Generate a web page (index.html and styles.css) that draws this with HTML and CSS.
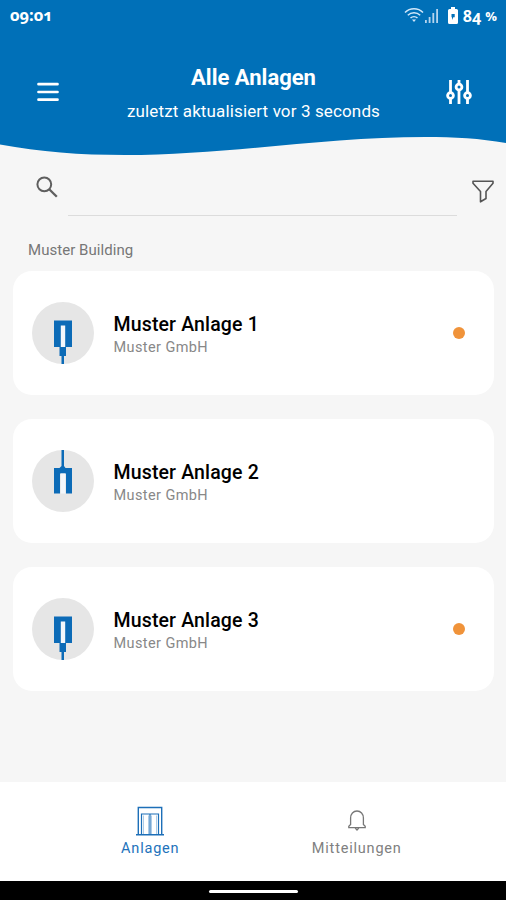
FILE: index.html
```
<!DOCTYPE html>
<html lang="de">
<head>
  <meta charset="UTF-8">
  <meta name="viewport" content="width=device-width, initial-scale=1.0">
  <title>Alle Anlagen</title>
  <link rel="stylesheet" href="styles.css">
</head>
<body>
  <header class="header">
    <div class="status-bar">
      <span class="time">09:01</span>
      <div class="status-icons">
        <svg class="wifi" width="20" height="16" viewBox="0 0 20 16" fill="none" stroke="#d3e8fa" stroke-width="1.5">
          <path d="M1 5.5C6 .6 14 .6 19 5.5M3.8 8.3c3.5-3.3 8.900-3.3 12.400 0M6.500 11c2-1.800 5-1.800 7 0"/>
          <path d="M8 12.500h4L10 15z" fill="#d3e8fa" stroke="none"/>
        </svg>
        <svg class="signal" width="14" height="15" viewBox="0 0 14 15" fill="#b5d4ee">
          <path d="M0 12h1.800v3H0zM3.700 9h1.800v6H3.700zM7.400 5h1.800v10H7.400zM11.200 1h1.800v14h-1.800z"/>
        </svg>
        <svg class="battery" width="10" height="17" viewBox="0 0 10 17">
          <path d="M3 0h4v2h1.500Q10 2 10 3.500v12Q10 17 8.500 17h-7Q0 17 0 15.500v-12Q0 2 1.500 2H3z" fill="#fff"/>
          <path d="M3.500 7h3.200v3.200H5.300L4 13v-2.800h-.5z" fill="#0070b8"/>
        </svg>
        <span class="number">84</span>
        <span class="percent">%</span>
      </div>
    </div>
    <div class="title-bar">
      <svg class="menu-icon" width="22" height="20" viewBox="0 0 22 20" stroke="#fff" stroke-width="2.700" stroke-linecap="round">
        <path d="M1.500 2.200h19M1.500 10h19M1.500 17.700h19"/>
      </svg>
      <div class="titles">
        <h1>Alle Anlagen</h1>
        <p>zuletzt aktualisiert vor 3 seconds</p>
      </div>
      <svg class="sliders-icon" width="26" height="26" viewBox="0 0 26 26" fill="none" stroke="#fff" stroke-width="2.800">
        <path d="M4.500 1v12.500M4.500 19.500V25M13 1v4M13 11v14M21.500 1v12.500M21.500 19.500V25"/>
        <circle cx="4.500" cy="16.500" r="2.900"/>
        <circle cx="13" cy="8" r="2.900"/>
        <circle cx="21.500" cy="16.500" r="2.900"/>
      </svg>
    </div>
  </header>
  <svg class="wave" width="506" height="19" viewBox="0 0 506 19">
    <path d="M0 0H506V6C480 1.500 455 0 425 0C325 0 225 18 125 18C80 18 40 15 0 7.500Z" fill="#0070b8"/>
  </svg>

  <main class="content">
    <div class="search">
      <svg class="search-icon" width="22" height="22" viewBox="0 0 22 22" fill="none" stroke="#5f5f5f">
        <circle cx="8.300" cy="8.300" r="6.900" stroke-width="2"/>
        <path d="M13 13l7.800 7.800" stroke-width="2.300"/>
      </svg>
      <div class="search-field"></div>
      <svg class="filter-icon" width="22" height="23" viewBox="0 0 22 23" fill="none" stroke="#555" stroke-width="1.600" stroke-linejoin="round">
        <path d="M1 1.300h20v2L14 11.500v7L8.500 21.800V11.500L1 3.300z"/>
      </svg>
    </div>

    <h2 class="building">Muster Building</h2>

    <div class="card">
      <svg class="avatar" width="62" height="62" viewBox="0 0 62 62">
        <circle cx="31" cy="31" r="31" fill="#e6e6e6"/>
        <path d="M22 18.500h18V45h-6v9h-2v8h-2.500v-8h-2v-9H22z" fill="#0c6bb7"/>
        <path d="M28.800 23.500h4.400V45h-4.400z" fill="#f3f7fb"/>
      </svg>
      <div class="info">
        <h3>Muster Anlage 1</h3>
        <p>Muster GmbH</p>
      </div>
      <span class="dot"></span>
    </div>

    <div class="card">
      <svg class="avatar" width="62" height="62" viewBox="0 0 62 62">
        <circle cx="31" cy="31" r="31" fill="#e6e6e6"/>
        <path d="M29.500 0H32v16l1.500 2H40v25.500h-6V23.500h-6v20h-6V18h5.500l2-2z" fill="#0c6bb7"/>
        <path d="M28.800 23.500h4.400v20h-4.400z" fill="#f3f7fb"/>
      </svg>
      <div class="info">
        <h3>Muster Anlage 2</h3>
        <p>Muster GmbH</p>
      </div>
    </div>

    <div class="card">
      <svg class="avatar" width="62" height="62" viewBox="0 0 62 62">
        <circle cx="31" cy="31" r="31" fill="#e6e6e6"/>
        <path d="M22 18.500h18V45h-6v9h-2v8h-2.500v-8h-2v-9H22z" fill="#0c6bb7"/>
        <path d="M28.800 23.500h4.400V45h-4.400z" fill="#f3f7fb"/>
      </svg>
      <div class="info">
        <h3>Muster Anlage 3</h3>
        <p>Muster GmbH</p>
      </div>
      <span class="dot"></span>
    </div>
  </main>

  <nav class="tabs">
    <div class="tab active">
      <svg width="28" height="30" viewBox="0 0 28 30" fill="none" stroke="#1d6fb8" stroke-width="1.400">
        <path d="M0 28.800h28M2.300 28.500V1.500h23.400v27"/>
        <path d="M5.500 28V8h17v20M14 8v20" stroke-width="1.200"/>
        <path d="M7.500 28V9.500M12.500 28V9.500M15.500 28V9.500M20.500 28V9.500" stroke-width=".6" stroke="#77a9d6"/>
      </svg>
      <span>Anlagen</span>
    </div>
    <div class="tab">
      <svg width="18" height="30" viewBox="0 0 18 30" fill="none" stroke="#777" stroke-width="1.300">
        <path d="M.8 21.700V20.300L2.600 18.500V12C2.600 8 5.300 5 9 5s6.400 3 6.400 7v6.500l1.800 1.800v1.400z"/>
        <path d="M7.200 22l1.800 2 1.800-2"/>
      </svg>
      <span>Mitteilungen</span>
    </div>
  </nav>
  <div class="system-bar"><div class="handle"></div></div>
</body>
</html>
```
FILE: styles.css
```
* {
  box-sizing: border-box;
}

body {
  margin: 0;
  height: 900px;
  display: flex;
  flex-direction: column;
  background: #f6f6f6;
  font-family: Roboto, sans-serif;
  overflow: hidden;
}

h1, h2, h3, p {
  margin: 0;
}

svg {
  display: block;
  flex-shrink: 0;
}

.header {
  height: 137px;
  background: #0070b8;
  color: #fff;
}

.status-bar {
  height: 32px;
  padding: 0 9px 0 10px;
  display: flex;
  align-items: center;
  justify-content: space-between;
  font-family: "Open Sans", sans-serif;
  font-size: 15px;
  font-weight: 700;
  font-feature-settings: "onum";
}

.time {
  font-size: 16.5px;
  line-height: 20px;
  margin-top: -2px;
}

.status-icons {
  display: flex;
  align-items: center;
}

.wifi {
  margin-top: -2px;
}

.signal {
  margin: -2px 0 0 1px;
}

.battery {
  margin: -2px 5px 0 9px;
}

.number {
  font-size: 16px;
}

.percent {
  margin-left: 4px;
  font-size: 13px;
}

.title-bar {
  height: 105px;
  padding: 0 34px 0 37px;
  display: flex;
  justify-content: space-between;
}

.menu-icon {
  margin-top: 50px;
}

.sliders-icon {
  margin-top: 47px;
}

.titles {
  padding: 33px 0 0 2px;
  text-align: center;
}

.titles h1 {
  font-size: 22px;
  line-height: 26px;
  font-weight: 700;
}

.titles p {
  margin-top: 9px;
  font-size: 17px;
  line-height: 22px;
  font-weight: 400;
  letter-spacing: 0.13px;
}

.wave {
  margin-bottom: -19px;
}

.content {
  flex: 1;
  padding: 0 12px 0 13px;
}

.search {
  height: 79px;
  display: flex;
  padding: 0 0 0 23px;
}

.search-icon {
  margin-top: 39px;
}

.search-field {
  flex: 1;
  margin: 0 15px 0 10px;
  border-bottom: 1px solid #dcdcdc;
}

.filter-icon {
  margin-top: 43px;
}

.building {
  height: 55px;
  padding: 22px 0 0 15px;
  color: #777;
  font-size: 15px;
  line-height: 24px;
  font-weight: 400;
  letter-spacing: 0.05px;
}

.card {
  height: 124px;
  margin-bottom: 24px;
  padding: 0 29px 0 19px;
  display: flex;
  align-items: center;
  background: #fff;
  border-radius: 19px;
}

.info {
  flex: 1;
  margin-left: 19.5px;
  padding-top: 5px;
}

.info h3 {
  color: #000;
  font-size: 19.5px;
  line-height: 24px;
  font-weight: 500;
  letter-spacing: 0.15px;
}

.info p {
  color: #888;
  font-size: 14.5px;
  line-height: 22px;
  letter-spacing: 0.4px;
}

.dot {
  width: 12px;
  height: 12px;
  border-radius: 50%;
  background: #f0933a;
}

.tabs {
  height: 99px;
  padding: 24px 46px 0 47px;
  display: flex;
  background: #fff;
}

.tab {
  flex: 1;
  display: flex;
  flex-direction: column;
  align-items: center;
  color: #808080;
  font-size: 14.5px;
  line-height: 25px;
  letter-spacing: 0.8px;
}

.tab.active {
  color: #2272bb;
}

.system-bar {
  height: 19px;
  padding-top: 9px;
  background: #000;
}

.handle {
  width: 89px;
  height: 3px;
  margin: 0 auto;
  border-radius: 2px;
  background: #fff;
}
```
